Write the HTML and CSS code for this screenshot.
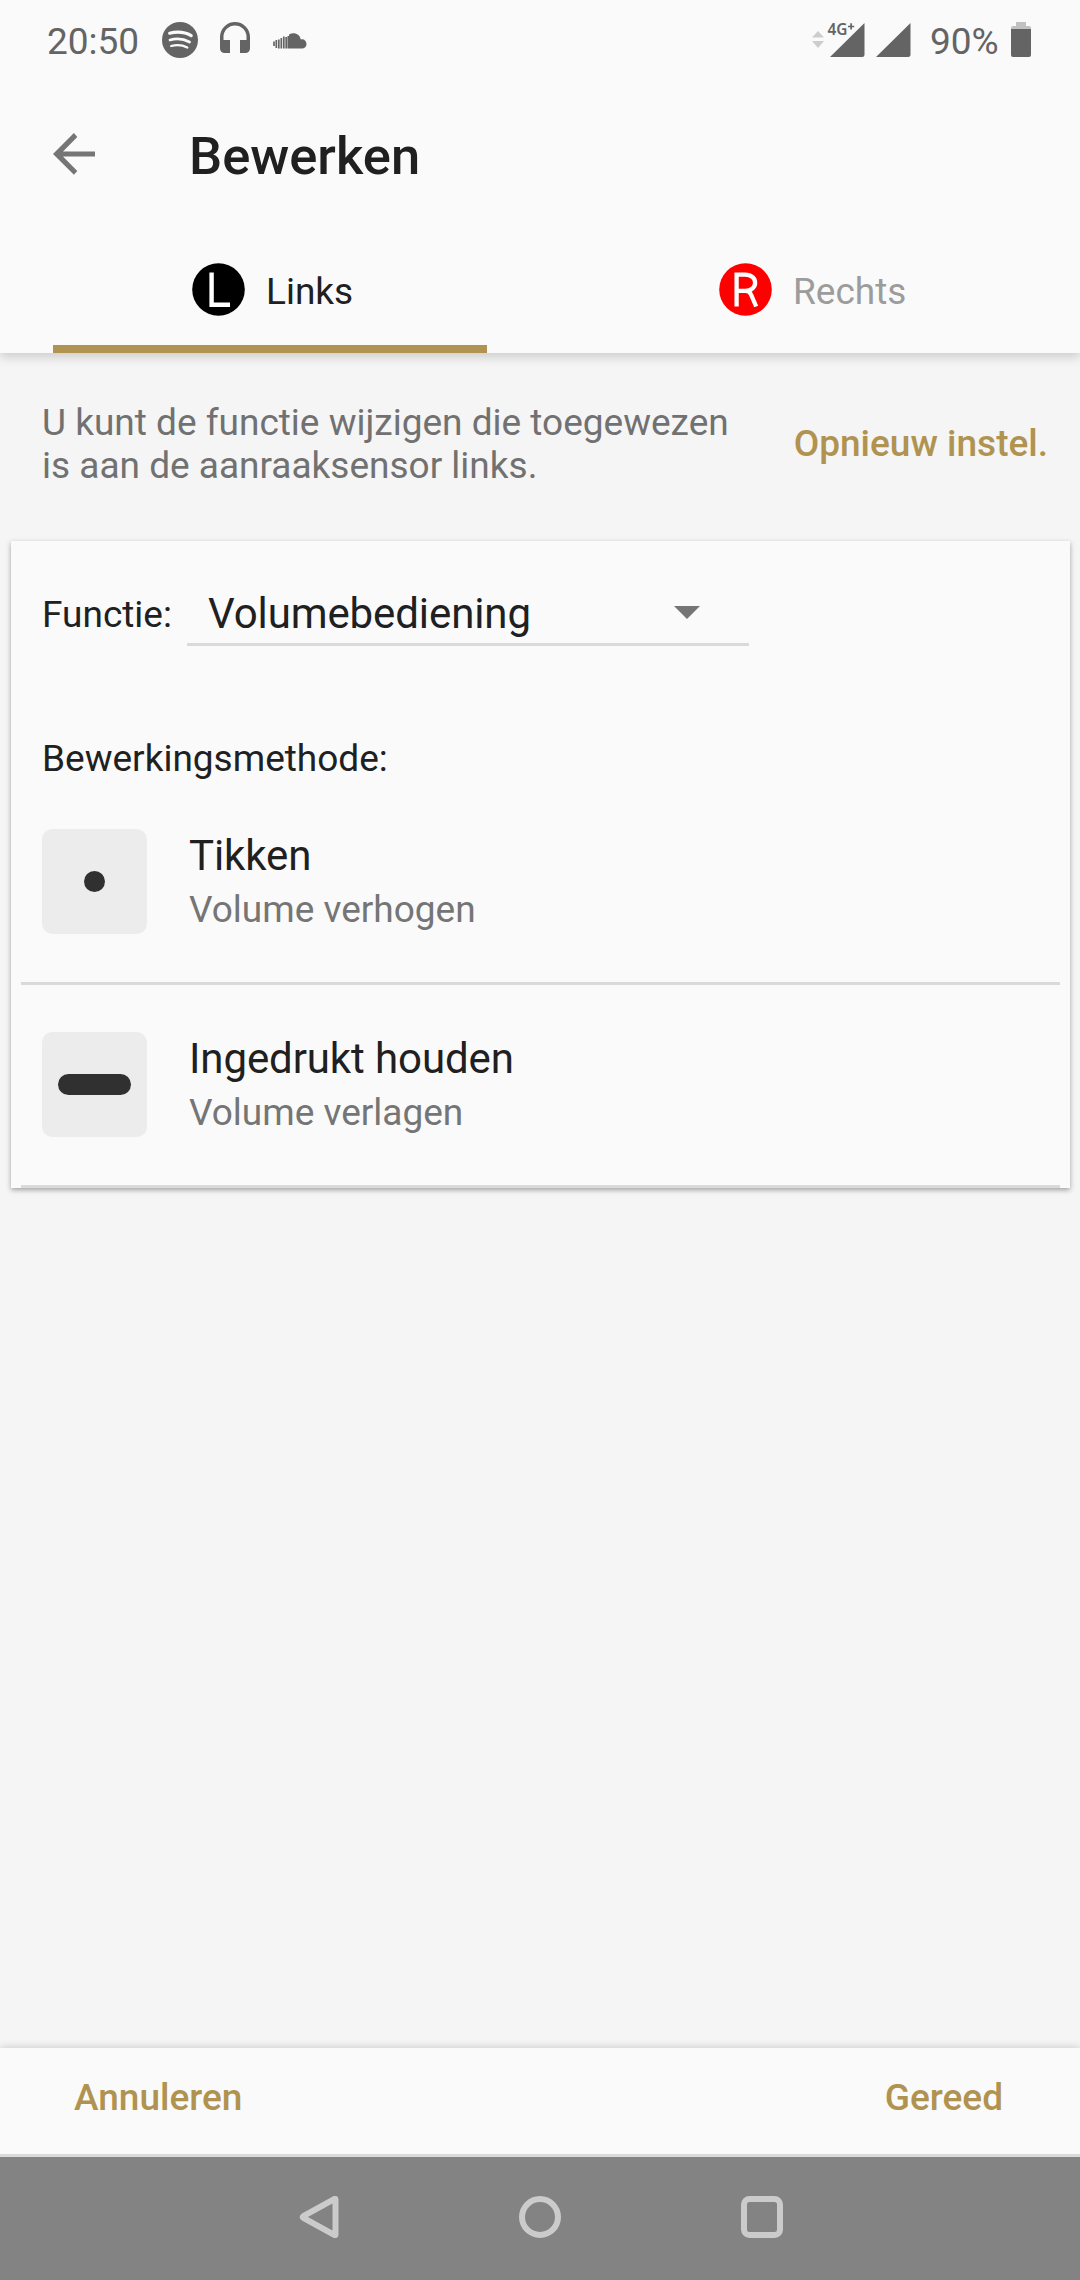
FILE: index.html
```html
<!DOCTYPE html>
<html lang="nl">
<head>
<meta charset="utf-8">
<title>Bewerken</title>
<link rel="stylesheet" href="styles.css">
</head>
<body>
<div class="screen">
  <header class="header">
    <div class="status">
      <span class="status-text clock">20:50</span>
      <svg class="spotify" width="36" height="36" viewBox="0 0 36 36"><circle cx="18" cy="18" r="18" fill="#646464"/><g fill="none" stroke="#fafafa" stroke-linecap="round"><path d="M7.6 11.2Q20 8.3 29.2 13.6" stroke-width="3.2"/><path d="M8 18Q18.500 15.200 27.500 20" stroke-width="2.800"/><path d="M9.200 24Q18 21.700 25.300 25.500" stroke-width="2.300"/></g></svg>
      <svg class="headphones" width="30" height="31" viewBox="0 0 30 31"><path d="M15 0A15 15 0 0 0 0 15V26.500A4.500 4.500 0 0 0 4.500 31H10V18H3.500V15A11.500 11.500 0 0 1 26.500 15V18H20V31H25.500A4.500 4.500 0 0 0 30 26.500V15A15 15 0 0 0 15 0Z" fill="#646464"/></svg>
      <svg class="cloud" width="34" height="16" viewBox="0 0 34 16"><path d="M16 1.500C21-1.500 27 1 27.800 6.500C31 5.600 33.500 8 33.500 11C33.500 13.800 31.500 15.500 29 15.500H16Z" fill="#646464"/><path d="M1 8.500V13M3.300 7V15M5.800 6.500V15.500M8.300 5V15.500M10.800 3.500V15.500M13.200 4V15.500M15.300 3V15.500" stroke="#646464" stroke-width="1.700"/></svg>
      <span class="spacer"></span>
      <svg class="signal" width="99" height="52" viewBox="0 -8 99 52"><path d="M0 15.500L6 9L12 15.500ZM0 19H12L6 26Z" fill="#cdcdcd"/><path d="M18 35L52.500 1V32.500Q52.500 35 50 35ZM64 35L98.500 1V32.500Q98.500 35 96 35Z" fill="#646464"/><text class="network" x="15.500" y="12.800" textLength="20" lengthAdjust="spacingAndGlyphs">4G</text><path d="M36 4.500H42.200M39.100 1.300V7.600" stroke="#646464" stroke-width="1.700"/></svg>
      <span class="status-text battery-text">90%</span>
      <svg class="battery" width="20" height="35" viewBox="0 0 20 35"><path d="M5 0H15V4H18Q20 4 20 6V8H0V6Q0 4 2 4H5Z" fill="#c1c1c1"/><path d="M0 7H20V33Q20 35 18 35H2Q0 35 0 33Z" fill="#646464"/></svg>
    </div>
    <div class="appbar">
      <svg class="back" width="42" height="42" viewBox="0 0 42 42"><path d="M42 18.400H10L24.300 4L20.900 0L0 20.900L20.900 41.800L24.300 38L10 23.500H42Z" fill="#757575"/></svg>
      <h1 class="title">Bewerken</h1>
    </div>
    <nav class="tabs">
      <div class="tab tab-active"><svg width="53" height="53" viewBox="0 0 53 53"><circle cx="26.500" cy="26.500" r="26.300"/><path d="M19.600 9.500V41.700H38" fill="none" stroke="#fff" stroke-width="4.400"/></svg><span>Links</span></div>
      <div class="tab"><svg width="53" height="53" viewBox="0 0 53 53"><circle cx="26.500" cy="26.500" r="26.300" fill="red"/><path d="M17.600 43.500V11.700H26C39.500 11.700 39.500 27.800 26 27.800H17.600M26.500 27.800Q30.500 27.800 32 31.500L37.200 43.500" fill="none" stroke="#fff" stroke-width="4.300"/></svg><span>Rechts</span></div>
    </nav>
  </header>
  <main class="main">
    <section class="intro">
      <p class="description">U kunt de functie wijzigen die toegewezen<br>is aan de aanraaksensor links.</p>
      <span class="action">Opnieuw instel.</span>
    </section>
    <section class="card">
      <div class="function-row">
        <span class="label">Functie:</span>
        <div class="select"><span>Volumebediening</span><svg width="26" height="13" viewBox="0 0 26 13"><path d="M0 0H26L13 13Z" fill="#757575"/></svg></div>
      </div>
      <h2 class="subhead">Bewerkingsmethode:</h2>
      <div class="method">
        <div class="tile"><span class="dot"></span></div>
        <div class="method-text"><div class="method-name">Tikken</div><div class="method-detail">Volume verhogen</div></div>
      </div>
      <div class="method">
        <div class="tile"><span class="dot dash"></span></div>
        <div class="method-text"><div class="method-name">Ingedrukt houden</div><div class="method-detail">Volume verlagen</div></div>
      </div>
    </section>
  </main>
  <footer class="footer"><span class="action">Annuleren</span><span class="action">Gereed</span></footer>
  <nav class="system-nav">
    <svg width="42" height="42" viewBox="0 0 42 42"><path d="M36 3.200Q36 2.500 35.200 2.900L3.800 20.200Q2.500 21 3.800 21.800L35.200 39.100Q36 39.500 36 38.800Z" transform="translate(2.500)"/></svg>
    <svg width="42" height="42" viewBox="0 0 42 42"><circle cx="21" cy="21" r="18"/></svg>
    <svg width="42" height="42" viewBox="0 0 42 42"><rect x="3" y="3" width="36" height="36" rx="5.500"/></svg>
  </nav>
</div>
</body>
</html>
```
FILE: styles.css
```css
* { box-sizing: border-box; }
body { margin: 0; font-family: Roboto, "Liberation Sans", sans-serif; font-size: 37px; color: #202020; background: #f5f5f5; }
svg { display: block; flex: none; }
h1, h2, p { margin: 0; }
.screen { width: 1080px; height: 2280px; display: flex; flex-direction: column; overflow: hidden; background: #f5f5f5; }
.header { height: 353px; background: #fafafa; box-shadow: 0 4px 10px rgba(0,0,0,.17); }
.status { height: 80px; display: flex; align-items: center; padding: 0 49px 0 47px; color: #646464; }
.status-text { line-height: 44px; padding-top: 3px; }
.clock { width: 115px; }
.headphones { margin: 0 23px 5px 22px; }
.cloud { margin-top: 1px; }
.spacer { flex: 1; }
.signal { margin-right: 19px; }
.network { font: 600 16px "Noto Sans", sans-serif; fill: #646464; }
.battery-text { width: 81px; }
.battery { margin-bottom: 1px; }
.appbar { height: 152px; display: flex; align-items: center; padding-left: 53px; }
.back { margin: 0 94px 5px 0; }
.title { font-size: 52.5px; font-weight: 500; line-height: 62px; }
.tabs { height: 121px; display: flex; padding: 0 53px; justify-content: space-between; }
.tab { width: 434px; display: flex; align-items: center; gap: 21px; padding: 1px 0 0 139px; border-bottom: 8px solid transparent; color: #9c9c9c; }
.tab span { line-height: 44px; padding-top: 6px; }
.tab:last-child { width: 447px; }
.tab-active { color: #202020; border-color: #b09350; }
.main { flex: 1; }
.intro { height: 188px; display: flex; align-items: center; justify-content: space-between; padding: 0 32px 7px 42px; }
.description { color: #717171; line-height: 43px; padding-top: 1px; }
.action { color: #b09350; font-weight: 500; line-height: 44px; }
.card { margin: 0 10px 0 11px; height: 647px; padding: 40px 10px 0; background: #fafafa; box-shadow: 0 2px 5px rgba(0,0,0,.35); }
.function-row { display: flex; align-items: center; height: 65px; padding-left: 21px; }
.label { width: 145px; padding-top: 2px; }
.select { width: 562px; height: 65px; border-bottom: 3px solid #dadada; display: flex; align-items: center; justify-content: space-between; padding: 0 49px 0 21px; font-size: 42px; }
.select span { letter-spacing: -.1px; padding-top: 2px; }
.label, .subhead { line-height: 44px; }
.subhead { margin: 91px 21px 0; font-size: 37px; font-weight: 400; }
.method { height: 203px; display: flex; border-bottom: 3px solid #dadada; padding: 47px 21px 0; }
.subhead + .method { padding-top: 48px; height: 204px; }
.tile { width: 105px; height: 105px; margin-right: 42px; border-radius: 10.5px; background: #ececec; display: grid; place-items: center; }
.dot { width: 21px; height: 21px; border-radius: 11px; background: #303030; }
.dash { width: 73px; }
.method-name { font-size: 42px; line-height: 53px; letter-spacing: -.1px; }
.method-detail { color: #757575; line-height: 55px; }
.footer { height: 109px; display: flex; justify-content: space-between; padding: 28px 77px 0 74px; background: #fafafa; border-bottom: 3px solid #dadada; box-shadow: 0 0 9px rgba(0,0,0,.2); }
.system-nav { height: 123px; background: #838383; display: flex; justify-content: center; gap: 180px; padding-top: 39px; }
.system-nav svg { fill: none; stroke: #cbcbcb; stroke-width: 6; stroke-linejoin: round; }
```
